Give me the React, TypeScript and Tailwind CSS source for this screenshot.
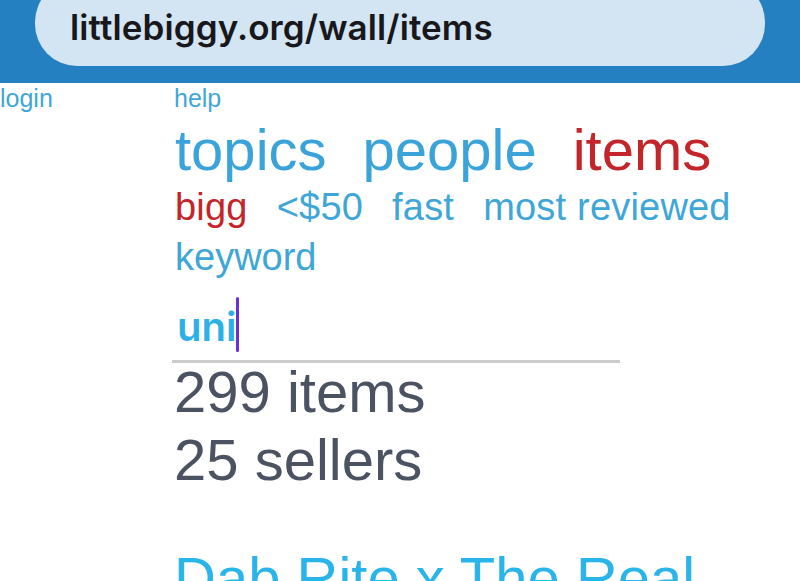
export default function App() {
  const sans = { fontFamily: '"Liberation Sans", Arial, sans-serif' };
  const inter = { fontFamily: 'Inter, "Noto Sans", sans-serif' };

  return (
    <div className="min-h-[581px] w-[800px] overflow-hidden bg-white" style={sans}>
      <div className="h-[83px] overflow-hidden bg-[#2580c2]">
        <div className="mx-[35px] -mt-[20px] flex h-[86px] items-end rounded-[42px] bg-[#d3e5f3] pb-[21px] pl-[35px]">
          <span
            className="text-[35px] font-semibold leading-none tracking-[0.1px] text-[#18181c]"
            style={inter}
          >
            littlebiggy.org/wall/items
          </span>
        </div>
      </div>

      <div className="flex">
        <div className="w-[174px] shrink-0 pt-[3px]">
          <a className="block text-[25px] leading-none text-[#3fa6d8]">login</a>
        </div>

        <div className="flex flex-col pt-[3px]">
          <a className="text-[25px] leading-none text-[#3fa6d8]">help</a>

          <div className="mt-[10px] flex gap-[36px] pl-px text-[58px] leading-none">
            <a className="text-[#3aa4da]">topics</a>
            <a className="text-[#3aa4da]">people</a>
            <a className="text-[#c4252a]">items</a>
          </div>

          <div className="mt-[9px] flex gap-[29px] pl-px text-[38px] leading-none tracking-[0.2px]">
            <a className="text-[#c4252a]">bigg</a>
            <a className="text-[#3fa6d8]">&lt;$50</a>
            <a className="text-[#3fa6d8]">fast</a>
            <a className="text-[#3fa6d8]">most reviewed</a>
          </div>

          <a className="mt-[12px] pl-px text-[38px] leading-none text-[#3fa6d8]">keyword</a>

          <div className="-ml-[2px] mt-[21px] w-[448px] border-b-[3px] border-[#cccccc] pb-[8px] pl-[5px]">
            <div className="flex items-start">
              <span
                className="mt-[10px] text-[40px] font-semibold leading-none text-[#2cb0e6]"
                style={inter}
              >
                uni
              </span>
              <span className="h-[55px] w-[3px] rounded-full bg-[#6b2fd8]" />
            </div>
          </div>

          <div className="text-[58px] leading-none text-[#4b5262]">299 items</div>
          <div className="mt-[10px] text-[58px] leading-none text-[#4b5262]">25 sellers</div>

          <a className="mt-[60px] whitespace-nowrap text-[58px] leading-none text-[#29b4ea]">
            Dab Rite x The Real
          </a>
        </div>
      </div>
    </div>
  );
}
